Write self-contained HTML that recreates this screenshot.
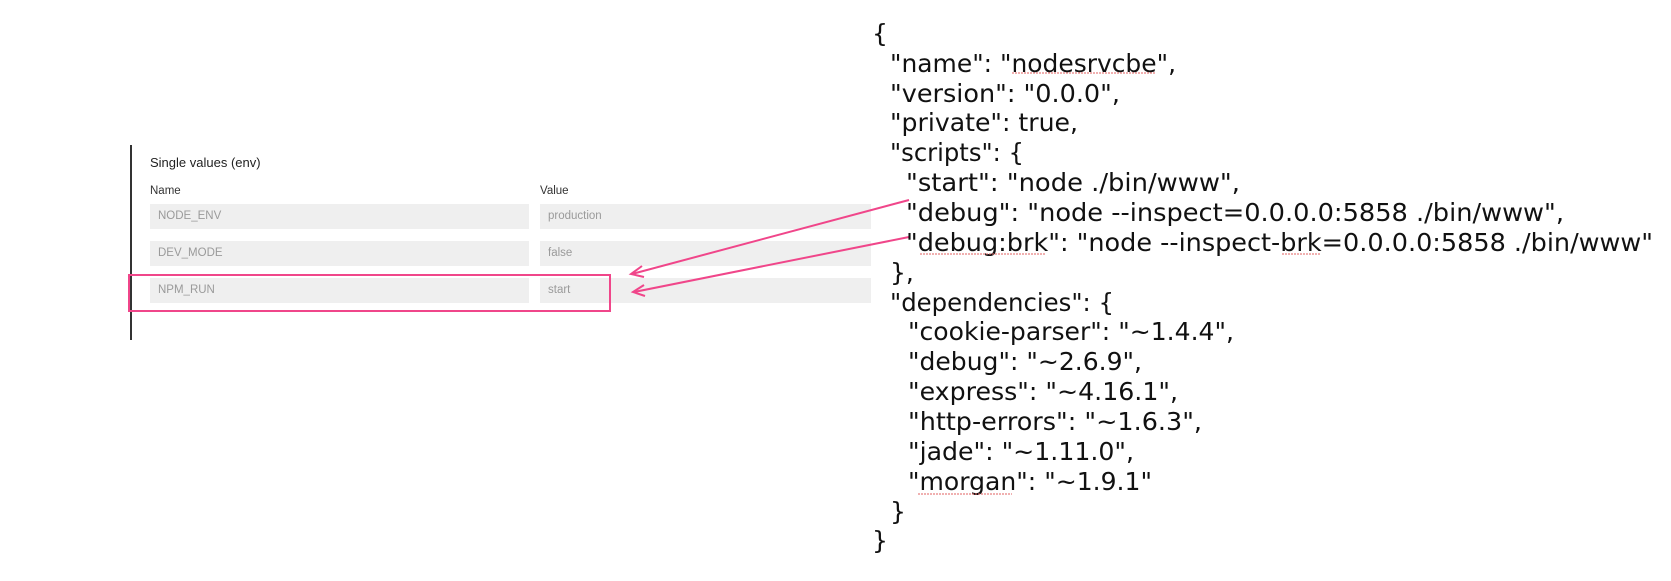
<!DOCTYPE html>
<html><head><meta charset="utf-8"><style>
html,body{margin:0;padding:0;background:#fff;width:1671px;height:581px;overflow:hidden;position:relative;font-family:"Liberation Sans",sans-serif}
.a{position:absolute}
.box{position:absolute;background:#efefef;height:25px;line-height:25px;font-size:11.5px;color:#9a9a9a;padding-left:8px;box-sizing:border-box}
.lbl{position:absolute;font-size:11.5px;color:#333}
</style></head><body>
<div class="a" style="left:130px;top:145px;width:2px;height:195px;background:#333"></div>
<div class="a" style="left:150px;top:155px;font-size:13px;color:#222">Single values (env)</div>
<div class="lbl" style="left:150px;top:185px">Name</div>
<div class="lbl" style="left:540px;top:185px">Value</div>
<div class="box" style="left:150px;top:204px;width:379px">NODE_ENV</div>
<div class="box" style="left:540px;top:204px;width:331px">production</div>
<div class="box" style="left:150px;top:241px;width:379px">DEV_MODE</div>
<div class="box" style="left:540px;top:241px;width:331px">false</div>
<div class="box" style="left:150px;top:278px;width:379px">NPM_RUN</div>
<div class="box" style="left:540px;top:278px;width:331px">start</div>
<div class="a" style="left:128px;top:274px;width:483px;height:38px;border:2px solid #f0468a;box-sizing:border-box"></div>
<svg class="a" style="left:0;top:0" width="1671" height="581">
<g stroke="#f0468a" stroke-width="2" fill="none">
<line x1="909" y1="200" x2="632" y2="274"/>
<polyline points="642,266 631,274 644,277"/>
<line x1="909" y1="237" x2="634" y2="292"/>
<polyline points="644,285 633,292 645,296"/>
</g>
<g font-family="DejaVu Sans,sans-serif" font-size="25" fill="#111">
<text x="872" y="42">{</text>
<text x="890" y="72" textLength="286" lengthAdjust="spacingAndGlyphs">"name": "nodesrvcbe",</text>
<text x="890" y="102" textLength="230" lengthAdjust="spacingAndGlyphs">"version": "0.0.0",</text>
<text x="890" y="131" textLength="188" lengthAdjust="spacingAndGlyphs">"private": true,</text>
<text x="890" y="161" textLength="134" lengthAdjust="spacingAndGlyphs">"scripts": {</text>
<text x="906" y="191" textLength="334" lengthAdjust="spacingAndGlyphs">"start": "node ./bin/www",</text>
<text x="906" y="221" textLength="658" lengthAdjust="spacingAndGlyphs">"debug": "node --inspect=0.0.0.0:5858 ./bin/www",</text>
<text x="906" y="251" textLength="747" lengthAdjust="spacingAndGlyphs">"debug:brk": "node --inspect-brk=0.0.0.0:5858 ./bin/www"</text>
<text x="890" y="281">},</text>
<text x="890" y="311" textLength="224" lengthAdjust="spacingAndGlyphs">"dependencies": {</text>
<text x="908" y="340" textLength="326" lengthAdjust="spacingAndGlyphs">"cookie-parser": "~1.4.4",</text>
<text x="908" y="370" textLength="234" lengthAdjust="spacingAndGlyphs">"debug": "~2.6.9",</text>
<text x="908" y="400" textLength="270" lengthAdjust="spacingAndGlyphs">"express": "~4.16.1",</text>
<text x="908" y="430" textLength="294" lengthAdjust="spacingAndGlyphs">"http-errors": "~1.6.3",</text>
<text x="908" y="460" textLength="226" lengthAdjust="spacingAndGlyphs">"jade": "~1.11.0",</text>
<text x="908" y="490" textLength="244" lengthAdjust="spacingAndGlyphs">"morgan": "~1.9.1"</text>
<text x="890" y="520">}</text>
<text x="872" y="549">}</text>
</g>
<g stroke="#e06060" stroke-width="1" fill="none" stroke-dasharray="2,1">
<line x1="1012" y1="73" x2="1155" y2="73"/>
<line x1="920" y1="254" x2="1045" y2="254"/>
<line x1="1282" y1="254" x2="1321" y2="254"/>
<line x1="918" y1="494" x2="1012" y2="494"/>
</g>
</svg>
</body></html>
